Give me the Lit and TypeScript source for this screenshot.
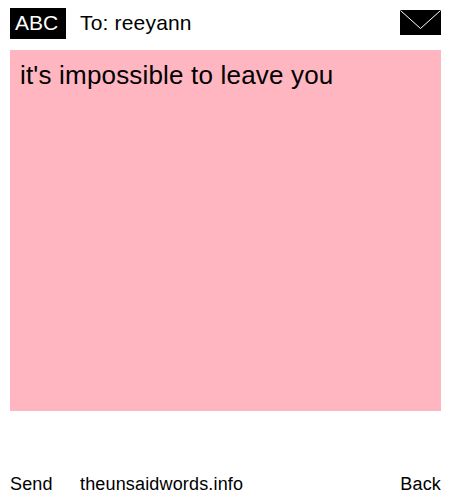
import { LitElement, html, css } from "lit";
import { customElement } from "lit/decorators.js";

@customElement("app-root")
export class AppRoot extends LitElement {
  static styles = css`
    :host {
      display: block;
      width: 450px;
      height: 500px;
      background: #fff;
      color: #000;
      font-family: "Liberation Sans", Arial, sans-serif;
      overflow: hidden;
    }
    .page {
      display: flex;
      flex-direction: column;
      height: 500px;
      padding: 8px 9px 5px 10px;
      box-sizing: border-box;
    }
    .head {
      display: flex;
      align-items: center;
      height: 31px;
      flex: none;
    }
    .badge {
      width: 56px;
      height: 31px;
      box-sizing: border-box;
      padding-left: 5px;
      background: #000;
      color: #fff;
      font-size: 21px;
      line-height: 30px;
    }
    .to {
      margin-left: 14px;
      font-size: 21px;
      letter-spacing: 0.18px;
      line-height: 29px;
      align-self: flex-start;
      flex: 1;
    }
    .env {
      display: block;
      width: 41px;
      height: 25px;
      margin-top: -2px;
    }
    .note {
      flex: none;
      height: 361px;
      margin-top: 11px;
      background: #ffb6c1;
      padding: 10px;
      box-sizing: border-box;
      font-size: 26px;
      letter-spacing: 0.18px;
      line-height: 31px;
    }
    .foot {
      margin-top: auto;
      display: flex;
      font-size: 18px;
      letter-spacing: 0.16px;
      line-height: 24px;
      position: relative;
      top: 1px;
    }
    .send { width: 70px; }
    .site { flex: 1; }
  `;

  render() {
    return html`
      <div class="page">
        <div class="head">
          <div class="badge">ABC</div>
          <div class="to">To: reeyann</div>
          <svg class="env" viewBox="0 0 41 25">
            <rect width="41" height="25" fill="#000"></rect>
            <path d="M0.5 0.5 L20.5 18.5 L40.5 0.5" fill="none" stroke="#fff" stroke-width="1"></path>
          </svg>
        </div>
        <div class="note">it's impossible to leave you</div>
        <div class="foot">
          <span class="send">Send</span>
          <span class="site">theunsaidwords.info</span>
          <span>Back</span>
        </div>
      </div>
    `;
  }
}
